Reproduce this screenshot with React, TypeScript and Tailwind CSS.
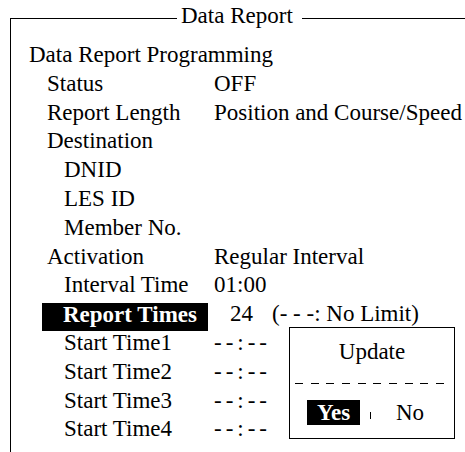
import React from 'react';

type Row = {
  label: string;
  indent: number;
  value?: string;
};

const rows: Row[] = [
  { label: 'Status', indent: 36, value: 'OFF' },
  { label: 'Report Length', indent: 36, value: 'Position and Course/Speed' },
  { label: 'Destination', indent: 36 },
  { label: 'DNID', indent: 53 },
  { label: 'LES ID', indent: 53 },
  { label: 'Member No.', indent: 53 },
  { label: 'Activation', indent: 36, value: 'Regular Interval' },
  { label: 'Interval Time', indent: 53, value: '01:00' },
];

const startTimes = ['Start Time1', 'Start Time2', 'Start Time3', 'Start Time4'];

const indentClass: Record<number, string> = {
  36: 'pl-[36px]',
  53: 'pl-[53px]',
};

const UpdateDialog: React.FC = () => (
  <div className="absolute left-[289px] top-[327px] w-[166px] h-[112px] border border-black bg-white">
    <div className="pt-[10px] text-center leading-[28.8px]">Update</div>
    <div className="ml-[5px] mt-[16px] w-[149px] flex justify-between">
      {Array.from({ length: 10 }).map((_, i) => (
        <div key={i} className="w-[8px] h-px bg-black" />
      ))}
    </div>
    <div className="mt-[16px] flex items-end">
      <span className="ml-[17px] w-[53px] h-[25px] bg-black text-white text-center font-bold leading-[25px]">Yes</span>
      <span className="ml-[10px] mb-[6px] w-px h-[7px] bg-black" />
      <span className="ml-[25px] leading-[25px]">No</span>
    </div>
  </div>
);

export default function App() {
  return (
    <div className="relative w-[465px] h-[452px] overflow-hidden bg-white text-black text-[23px] font-['Liberation_Serif'] flex flex-col">
      <div className="ml-[10px] mt-[18px] flex-1 border-l border-black">
        {/* title row */}
        <div className="-mt-[15px] h-[30px] flex items-start">
          <div className="mt-[15px] w-[166px] h-px bg-black" />
          <div className="ml-[4px] mr-[9px] -mt-[1px] leading-[28.8px] whitespace-nowrap">Data Report</div>
          <div className="mt-[15px] flex-1 h-px bg-black" />
        </div>

        <div className="pt-[8px] leading-[28.8px] whitespace-nowrap">
          <div className="pl-[18px]">Data Report Programming</div>
          {rows.map((r) => (
            <div key={r.label} className="flex h-[28.8px]">
              <div className={`w-[203px] shrink-0 ${indentClass[r.indent]}`}>{r.label}</div>
              {r.value && <div>{r.value}</div>}
            </div>
          ))}

          <div className="flex h-[28.8px]">
            <div className="w-[203px] shrink-0">
              <div className="ml-[31px] mt-[3px] w-[166px] h-[28px] pl-[21px] bg-black text-white font-bold leading-[24px]">
                Report Times
              </div>
            </div>
            <div className="pl-[16px]">24</div>
            <div className="pl-[19px]">(- - -: No Limit)</div>
          </div>

          {startTimes.map((t) => (
            <div key={t} className="flex h-[28.8px]">
              <div className="w-[203px] shrink-0 pl-[53px]">{t}</div>
              <div className="tracking-[4px]">--:--</div>
            </div>
          ))}
        </div>
      </div>

      <UpdateDialog />
    </div>
  );
}
